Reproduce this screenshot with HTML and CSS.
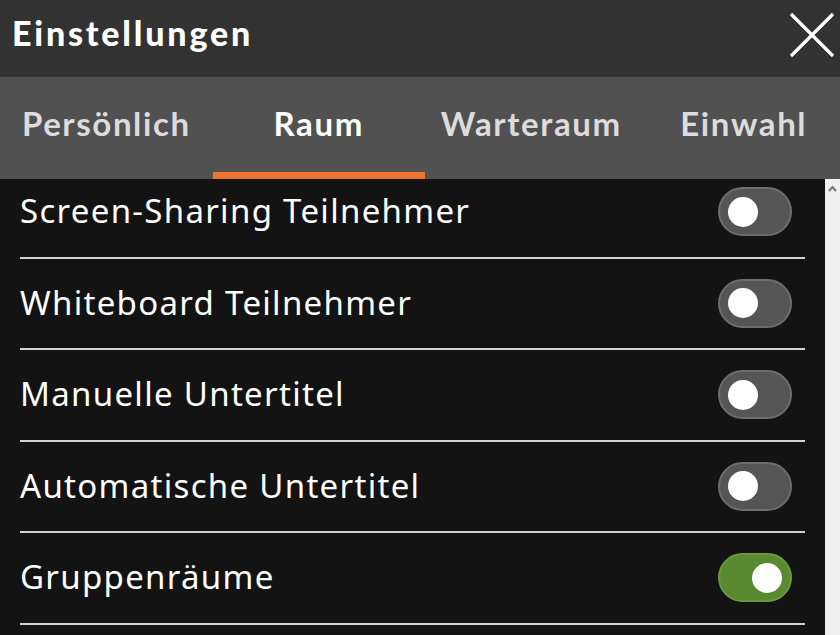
FILE: index.html
```html
<!DOCTYPE html>
<html>
<head>
  <title>Einstellungen</title>
  <link rel="stylesheet" href="styles.css">
</head>
<body>
  <div class="dialog">
    <header class="title-bar">
      <h1>Einstellungen</h1>
      <button class="close-button" aria-label="Schließen">
        <svg width="46" height="46" viewBox="0 0 46 46">
          <path d="M2 2 L44 44 M44 2 L2 44" stroke="#fff" stroke-width="3.2" fill="none"/>
        </svg>
      </button>
    </header>

    <nav class="tabs">
      <a class="tab">Persönlich</a>
      <a class="tab active">Raum</a>
      <a class="tab">Warteraum</a>
      <a class="tab">Einwahl</a>
    </nav>

    <div class="content">
      <div class="settings">
        <div class="setting-list">
          <div class="setting-row">
            <span class="setting-label">Screen-Sharing Teilnehmer</span>
            <span class="switch"><span class="knob"></span></span>
          </div>
          <div class="setting-row">
            <span class="setting-label">Whiteboard Teilnehmer</span>
            <span class="switch"><span class="knob"></span></span>
          </div>
          <div class="setting-row">
            <span class="setting-label">Manuelle Untertitel</span>
            <span class="switch"><span class="knob"></span></span>
          </div>
          <div class="setting-row">
            <span class="setting-label">Automatische Untertitel</span>
            <span class="switch"><span class="knob"></span></span>
          </div>
          <div class="setting-row">
            <span class="setting-label">Gruppenräume</span>
            <span class="switch on"><span class="knob"></span></span>
          </div>
        </div>
      </div>
      <div class="scrollbar">
        <svg width="9" height="7" viewBox="0 0 9 7">
          <path d="M1 6 L4.5 2 L8 6" stroke="#777" stroke-width="2" fill="none"/>
        </svg>
      </div>
    </div>
  </div>
</body>
</html>
```

FILE: styles.css
```css
/* settings dialog */
body {
  margin: 0;
  background-color: #131313;
  font-family: "Lato", "Noto Sans", sans-serif;
  color: #fff;
  overflow: hidden;
}

.dialog {
  width: 840px;
  height: 635px;
  display: flex;
  flex-direction: column;
  overflow: hidden;
}

.title-bar {
  height: 77px;
  flex-shrink: 0;
  background-color: #323232;
  display: flex;
  align-items: center;
  justify-content: space-between;
  padding: 0 5px 0 12px;
  box-sizing: border-box;
}

.title-bar h1 {
  margin: 0;
  font-size: 34px;
  font-weight: 900;
  letter-spacing: 2.8px;
  padding-bottom: 12px;
}

.close-button {
  background: none;
  border: none;
  padding: 0;
  margin-bottom: 8px;
  cursor: pointer;
  display: flex;
}

.tabs {
  height: 102px;
  flex-shrink: 0;
  width: 850px;
  background-color: #515151;
  display: flex;
}

.tab {
  flex: 1;
  display: flex;
  align-items: center;
  justify-content: center;
  font-size: 33px;
  font-weight: bold;
  letter-spacing: 1.6px;
  color: #dcdcdc;
  padding-bottom: 3px;
  box-sizing: border-box;
  border-bottom: 7px solid transparent;
}

.tab.active {
  color: #fff;
  border-bottom-color: #ef7430;
}

.content {
  flex: 1;
  display: flex;
  overflow: hidden;
}

.settings {
  flex: 1;
  overflow: hidden;
}

.setting-list {
  margin: -12px 20px 0 20px;
}

.setting-row {
  height: 89.5px;
  border-bottom: 2px solid #d2d2d2;
  display: flex;
  align-items: center;
  justify-content: space-between;
  padding-right: 13px;
}

.setting-label {
  font-family: "Noto Sans", sans-serif;
  font-size: 33px;
  letter-spacing: 1.3px;
  padding-bottom: 2px;
}

.switch {
  width: 74px;
  height: 49px;
  box-sizing: border-box;
  border-radius: 25px;
  background-color: #555;
  border: 2px solid #6d6d6d;
  display: flex;
  align-items: center;
  padding: 0 8px;
}

.switch .knob {
  width: 30px;
  height: 30px;
  border-radius: 50%;
  background-color: #fff;
}

.switch.on {
  background-color: #5a8a30;
  border-color: #6a9a40;
  justify-content: flex-end;
}

.scrollbar {
  width: 15px;
  background-color: #f0f0f0;
  display: flex;
  justify-content: center;
  align-items: flex-start;
  padding-top: 6px;
  box-sizing: border-box;
}
```
